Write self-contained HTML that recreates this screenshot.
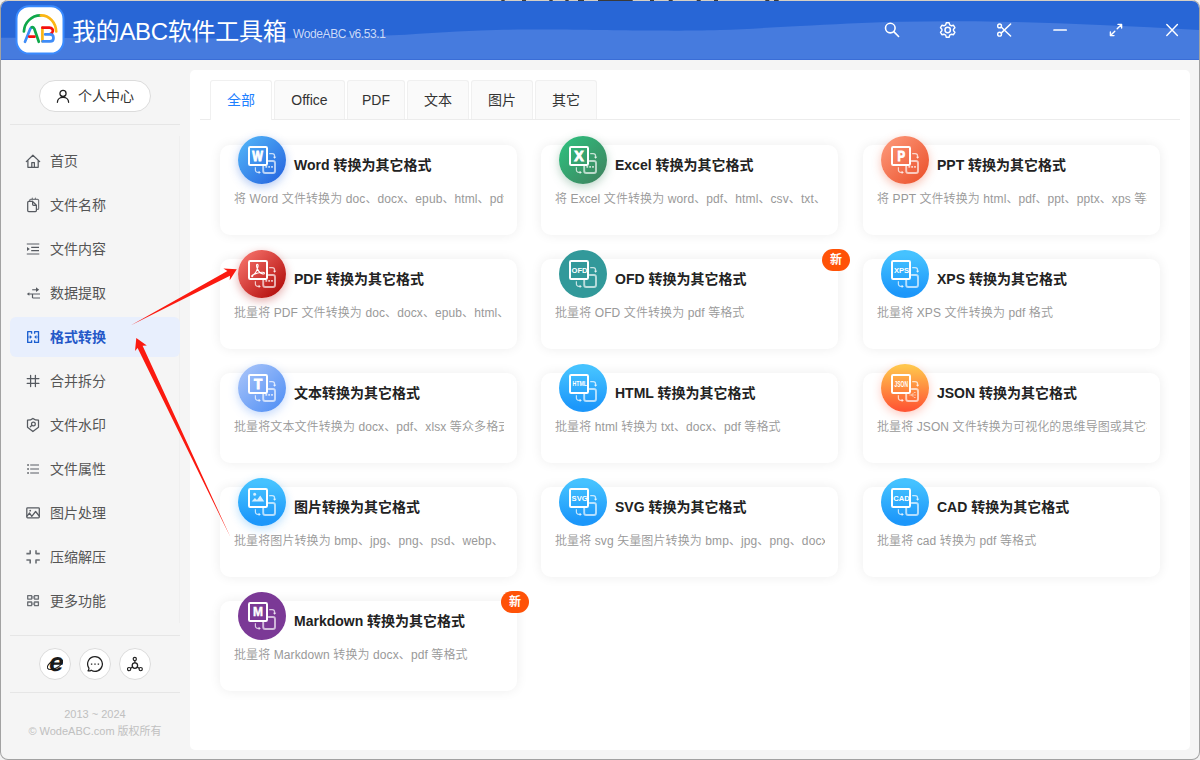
<!DOCTYPE html>
<html lang="zh-CN">
<head>
<meta charset="utf-8">
<title>我的ABC软件工具箱</title>
<style>
*{box-sizing:border-box;margin:0;padding:0}
html,body{width:1200px;height:760px;overflow:hidden}
body{background:#f2f2f2;font-family:"Liberation Sans","Noto Sans CJK SC",sans-serif;color:#333;position:relative}
#edgeT{position:absolute;left:0;top:0}
#win{position:absolute;left:1px;top:1px;width:1198px;height:758px;background:#f5f5f5;border-radius:7px;overflow:hidden;box-shadow:0 0 0 1px #a2a2a2}
#abs{position:absolute;left:-1px;top:-1px;width:1200px;height:760px}
#abs>*{position:absolute}
/* title bar */
#tb{left:0;top:0;width:1200px;height:60px;background:#2866d6;overflow:hidden}
#tb>*{position:absolute}
#title{left:72px;top:14px;font-size:24px;line-height:36px;color:#fff;white-space:nowrap;letter-spacing:-.3px}
#ver{left:293px;top:24px;font-size:12px;line-height:20px;color:#cbdaf7;white-space:nowrap;letter-spacing:-.4px}
/* sidebar */
#uc{left:39px;top:80px;width:112px;height:32px;border:1px solid #dcdcdc;border-radius:16px;background:#fff}
#uc span{position:absolute;left:38px;top:4px;line-height:22px;font-size:14px;color:#333;white-space:nowrap}
#uc svg{position:absolute;left:15px;top:7px;width:16px;height:16px}
.hr{left:10px;width:170px;height:1px;background:#e6e6e6}
#vline{left:179px;top:136px;width:1px;height:487px;background:#efefef}
.mi{left:10px;width:170px;height:40px;border-radius:6px;font-size:14px;color:#555}
.mi span{position:absolute;left:40px;top:8px;line-height:24px;white-space:nowrap}
.mi svg{position:absolute;left:15px;top:12px;width:16px;height:16px}
.mi.on{background:#e8effd;color:#2458c8;font-weight:700}
.cb{top:648px;width:32px;height:32px;border-radius:50%;background:#fff;border:1px solid #dcdcdc}
.cb svg{position:absolute;left:7px;top:7px;width:16px;height:16px}
.ft{left:0;width:190px;text-align:center;font-size:11px;color:#c0c0c0;line-height:16px;white-space:nowrap}
/* main */
#main{left:190px;top:70px;width:1000px;height:680px;background:#fff;border-radius:5px}
#tabline{left:200px;top:119px;width:980px;height:1px;background:#ececec}
.tab{top:80px;height:39px;border:1px solid #f0f0f0;border-bottom:none;background:#fafafa;border-radius:3px 3px 0 0;font-size:14px;color:#333;text-align:center;line-height:38px}
.tab.on{background:#fff;color:#1e80ff;height:40px}
.card{width:297px;height:90px;background:#fff;border-radius:10px;box-shadow:0 0 12px rgba(0,0,0,.075)}
.ic{position:absolute;left:18px;top:-9px;width:48px;height:48px;border-radius:50%}
.ic-word{background:linear-gradient(135deg,#4fb0f7 10%,#2868e0 90%);box-shadow:0 3px 10px rgba(40,104,224,.35)}
.ic-excel{background:linear-gradient(135deg,#2fbd7d 10%,#3e8660 90%);box-shadow:0 3px 10px rgba(62,134,96,.35)}
.ic-ppt{background:linear-gradient(135deg,#fc9576 10%,#ec5530 90%);box-shadow:0 3px 10px rgba(236,85,48,.35)}
.ic-pdf{background:linear-gradient(135deg,#f46f68 10%,#b30e0c 90%);box-shadow:0 3px 10px rgba(179,14,12,.35)}
.ic-ofd{background:#32999a}
.ic-xps,.ic-html,.ic-img,.ic-svg,.ic-cad{background:linear-gradient(180deg,#45c2ff 10%,#1c97fa 90%)}
.ic-img{box-shadow:0 3px 10px rgba(28,151,250,.3)}
.ic-txt{background:linear-gradient(135deg,#a3c1f9 10%,#5592f5 90%);box-shadow:0 3px 10px rgba(85,146,245,.35)}
.ic-json{background:linear-gradient(180deg,#ffc54c 5%,#ff5634 95%);box-shadow:0 3px 10px rgba(255,86,52,.3)}
.ic-md{background:#7b3996}
.ic svg{position:absolute;left:0;top:0;width:48px;height:48px}
.ct{position:absolute;left:74px;top:8px;font-size:14px;line-height:24px;font-weight:700;color:#222;white-space:nowrap}
.cd{position:absolute;left:14px;top:44px;width:270px;overflow:hidden;font-size:12px;line-height:20px;color:#999;font-weight:350;white-space:nowrap;letter-spacing:.1px}
.new{position:absolute;right:-12px;top:-10px;width:28px;height:22px;border-radius:11px;background:#ff5207;color:#fff;font-size:12px;line-height:22px;text-align:center;font-weight:700}
#arrows{left:0;top:0;width:1200px;height:760px;pointer-events:none}
</style>
</head>
<body>
<div id="win"><div id="abs">
  <div id="tb">
    <svg width="1200" height="60" viewBox="0 0 1200 60" style="left:0;top:0"><path d="M0 37.7C41.7 37.83 103.3 38.17 150 38.3C196.7 38.43 241.7 38.92 280 38.5C318.3 38.08 346.7 37.15 380 35.8C413.3 34.45 451.7 31.43 480 30.4C508.3 29.37 521.7 29.57 550 29.6C578.3 29.63 621.7 30.53 650 30.6C678.3 30.67 695.0 30.77 720 30C745.0 29.23 770.0 27.37 800 26C830.0 24.63 866.7 22.52 900 21.8C933.3 21.08 966.7 21.17 1000 21.7C1033.3 22.23 1066.7 23.62 1100 25C1133.3 26.38 1166.7 28.33 1200 30V60H0z" fill="#467bde"/><path d="M0 59.500H1200" stroke="#3a6dd6" stroke-width="1"/><rect x="16.500" y="6.200" width="47" height="47.300" rx="12.500" fill="#fff" stroke="#3a8bff" stroke-width="2"/><g fill="none" stroke-width="2.700" stroke-linecap="round" stroke-linejoin="round"><path d="M23.900 31.500C24.300 22.500 31.500 15.500 40.500 15.400" stroke="#0fa84a"/><path d="M40.900 15.400C49.600 15.500 55.800 22.500 56.200 31.500" stroke="#fbb615"/><path d="M25 41.800L30.400 28.600Q31.300 27 32.600 27.400" stroke="#3f8cf7"/><path d="M31.800 27.200Q33.400 26.600 34.300 28.800L38.800 41.800" stroke="#0fa84a"/><path d="M29.300 36.700H34.500" stroke="#f50f0f"/><path d="M42.400 27.900V41.200" stroke="#fbb615"/><path d="M42.400 27.700H49.400C52.200 27.700 53 29.600 52.800 31.200C52.600 32.800 51.600 33.600 50.500 33.900" stroke="#f50f0f"/><path d="M45.200 34.400H50C52.400 34.400 53.500 36.100 53.500 37.900C53.500 39.900 52.200 41.400 50 41.400H42.600" stroke="#3f8cf7"/></g><g fill="none" stroke="#fff" stroke-width="1.600" stroke-linecap="round" stroke-linejoin="round"><circle cx="890.300" cy="28.100" r="4.800"/><path d="M893.800 31.600L898.600 36.500"/><circle cx="947.700" cy="30" r="2.700" stroke-width="1.500"/><path d="M946.300 22.800H949.100L949.700 24.800L951.500 25.800L953.500 25.300L954.900 27.700L953.500 29.200V30.800L954.900 32.300L953.500 34.700L951.500 34.200L949.700 35.200L949.100 37.200H946.300L945.700 35.200L943.900 34.200L941.900 34.700L940.500 32.300L941.900 30.800V29.200L940.500 27.700L941.900 25.300L943.900 25.800L945.700 24.800z" stroke-width="1.400"/><circle cx="999.600" cy="25.900" r="1.900" stroke-width="1.400"/><circle cx="999.600" cy="34.200" r="1.900" stroke-width="1.400"/><path d="M1001.200 27L1010.600 36M1001.200 33.100L1010.600 24" stroke-width="1.500"/><path d="M1054 30H1066.200" stroke-width="1.700"/><path d="M1117.200 28.800L1121.500 24.500M1118 24.400H1121.600V28M1114.800 31.200L1110.500 35.500M1110.400 32V35.600H1114" stroke-width="1.400"/><path d="M1166.800 24.600L1177.400 35.600M1177.400 24.600L1166.800 35.600" stroke-width="1.400"/></g></svg>
    <div id="title">我的ABC软件工具箱</div>
    <div id="ver">WodeABC v6.53.1</div>
    
  </div>
  <div id="uc"><svg viewBox="0 0 16 16"><circle cx="8" cy="5.400" r="3.050" fill="none" stroke="#222" stroke-width="1.300"/><path d="M2.400 14.300C2.400 11.300 4.800 9.400 8 9.400S13.600 11.300 13.600 14.300" fill="none" stroke="#222" stroke-width="1.300" stroke-linecap="round"/></svg><span>个人中心</span></div>
  <div class="hr" style="top:124px"></div>
  <div id="vline"></div>
  <div class="mi" style="top:141px"><svg viewBox="0 0 16 16"><path d="M1.300 8.600L7.900 2.200L14.700 8.600M2.900 7.500V14.300H13.200V7.500M6.800 14.300V9.600H9.400V14.300" fill="none" stroke="#565a60" stroke-width="1.25" stroke-linecap="round" stroke-linejoin="round"/></svg><span>首页</span></div>
  <div class="mi" style="top:185px"><svg viewBox="0 0 16 16"><path d="M4.700 4.200V3.300a1 1 0 0 1 1-1H12.600a1 1 0 0 1 1 1V11.400a1 1 0 0 1-1 1H11.600M7.300 2.300V1.200M10.400 2.300V1.200" fill="none" stroke="#565a60" stroke-width="1.25" stroke-linecap="round" stroke-linejoin="round" stroke-opacity=".8"/><path d="M7.600 4.400H3.700a1 1 0 0 0-1 1V13.500a1 1 0 0 0 1 1H10.400a1 1 0 0 0 1-1V8.300L7.600 4.400V7.300a1 1 0 0 0 1 1H11.400" fill="none" stroke="#565a60" stroke-width="1.25" stroke-linecap="round" stroke-linejoin="round"/></svg><span>文件名称</span></div>
  <div class="mi" style="top:229px"><svg viewBox="0 0 16 16"><path d="M1.800 3H14.300M1.800 13H14.300" fill="none" stroke="#8d9095" stroke-width="1.5"/><path d="M6.200 6.400H14M6.200 9.600H14" fill="none" stroke="#565a60" stroke-width="1.3"/><path d="M2 5.900L4.800 8L2 10.100z" fill="#565a60"/></svg><span>文件内容</span></div>
  <div class="mi" style="top:273px"><svg viewBox="0 0 16 16"><path d="M7.200 4.700H11.500" fill="none" stroke="#7a7d82" stroke-width="1.4"/><path d="M11 2.300L14.200 4.700L11 7.100z" fill="#565a60"/><path d="M4 9H15M7.500 13H15" fill="none" stroke="#8d9095" stroke-width="1.5"/><path d="M7.500 9V13" fill="none" stroke="#565a60" stroke-width="1.2"/><path d="M4.300 7.200L1.800 9L4.300 10.800z" fill="#565a60"/></svg><span>数据提取</span></div>
  <div class="mi on" style="top:317px"><svg viewBox="0 0 16 16"><path d="M6.600 4.800V2.600H2.700V13.400H6.600V11.200M9.600 4.800V2.600H13.500V13.400H9.600V11.200" fill="none" stroke="#1b5fd0" stroke-width="1.35" stroke-linejoin="round"/><path d="M2.700 8H5M13.500 8H11.200" stroke="#1b5fd0" stroke-opacity=".7" stroke-width="1.200" fill="none"/><path d="M4.800 6.100L7 8L4.800 9.900zM11.400 6.100L9.200 8L11.400 9.900z" fill="#1b5fd0"/></svg><span>格式转换</span></div>
  <div class="mi" style="top:361px"><svg viewBox="0 0 16 16"><path d="M5.600 2.300V13.600M10.400 2.300V13.600M2.200 5.500H13.900M2.200 10.400H13.900" fill="none" stroke="#565a60" stroke-width="1.25" stroke-linecap="round" stroke-linejoin="round"/></svg><span>合并拆分</span></div>
  <div class="mi" style="top:405px"><svg viewBox="0 0 16 16"><path d="M7.900 1.500C6.500 2.700 4.500 3.200 2.500 3.200V10.300L7.900 14.500L13.500 10.300V3.200C11.500 3.200 9.400 2.700 7.900 1.500z" fill="none" stroke="#565a60" stroke-width="1.25" stroke-linecap="round" stroke-linejoin="round"/><circle cx="8.400" cy="6.900" r="1.900" fill="none" stroke="#565a60" stroke-width="1.25" stroke-linecap="round" stroke-linejoin="round"/><path d="M7 8.300L5.300 9.800" fill="none" stroke="#565a60" stroke-width="1.25" stroke-linecap="round" stroke-linejoin="round"/></svg><span>文件水印</span></div>
  <div class="mi" style="top:449px"><svg viewBox="0 0 16 16"><path d="M2.200 4H3.900M2.200 8H3.900M2.200 12H3.900" fill="none" stroke="#565a60" stroke-width="1.700"/><path d="M5.200 4H14M5.200 8H14M5.200 12H14" fill="none" stroke="#8d9095" stroke-width="1.700"/></svg><span>文件属性</span></div>
  <div class="mi" style="top:493px"><svg viewBox="0 0 16 16"><rect x="1.800" y="2.800" width="12.500" height="10.100" rx=".8" fill="none" stroke="#565a60" stroke-width="1.25" stroke-linecap="round" stroke-linejoin="round"/><circle cx="5.200" cy="5.700" r=".9" fill="#565a60"/><path d="M2 11.200L4.600 8L6.800 11.300L10.600 6.500L14.200 11" fill="none" stroke="#565a60" stroke-width="1.25" stroke-linecap="round" stroke-linejoin="round" stroke-width="1.050"/></svg><span>图片处理</span></div>
  <div class="mi" style="top:537px"><svg viewBox="0 0 16 16"><path d="M1.400 4.600H5.200V1.200M14.800 4.600H11V1.200M1.400 11H5.200V14.500M14.800 11H11V14.500" fill="none" stroke="#6a6e73" stroke-width="1.600" stroke-linejoin="round"/></svg><span>压缩解压</span></div>
  <div class="mi" style="top:581px"><svg viewBox="0 0 16 16"><path d="M2.700 2.600H6.600V6.100H2.700zM9.500 2.600H13.400V6.100H9.500zM2.700 9H6.600V12.600H2.700zM9.500 9H13.400V12.600H9.500z" fill="none" stroke="#6a6e73" stroke-width="1.300" stroke-linejoin="round"/><path d="M6.600 4.350H9.500M6.600 10.800H9.500" stroke="#8d9095" stroke-opacity=".8" stroke-width="2.600" fill="none"/></svg><span>更多功能</span></div>
  <div class="hr" style="top:635px"></div>
  <div class="cb" style="left:39px"><svg viewBox="0 0 16 16"><ellipse cx="8" cy="8.300" rx="8.400" ry="3.900" transform="rotate(-28 8 8.300)" fill="none" stroke="#222" stroke-width="1.100"/><text x="8.300" y="15" text-anchor="middle" font-family="Liberation Sans,sans-serif" font-size="26" font-weight="700" fill="#1a1a1a" transform="skewX(-9) translate(2.300 0)">e</text></svg></div>
  <div class="cb" style="left:79px"><svg viewBox="0 0 16 16"><path d="M8 .700A7.300 7.300 0 1 1 4.200 14.200C3.300 14.900 2 15.100 1 14.800C1.700 14 2 13.100 1.900 12.100A7.300 7.300 0 0 1 8 .700z" fill="none" stroke="#222" stroke-width="1.250" stroke-linejoin="round"/><path d="M3.900 8.100H5.300M7.300 8.100H8.700M10.700 8.100H12.100" stroke="#222" stroke-width="1.400" fill="none"/></svg></div>
  <div class="cb" style="left:119px"><svg viewBox="0 0 16 16"><circle cx="7.900" cy="9.600" r="2.700" fill="none" stroke="#222" stroke-width="1.300"/><circle cx="7.800" cy="2.900" r="1.600" fill="none" stroke="#222" stroke-width="1.150"/><circle cx="2.100" cy="13.100" r="1.650" fill="none" stroke="#222" stroke-width="1.150"/><circle cx="13.700" cy="13.100" r="1.650" fill="none" stroke="#222" stroke-width="1.150"/><path d="M7.900 4.500V6.900M5.600 11.100L3.500 12.300M10.200 11.100L12.300 12.300" stroke="#222" stroke-width="1.300" fill="none"/></svg></div>
  <div class="hr" style="top:692px"></div>
  <div class="ft" style="top:706px">2013 ~ 2024</div>
  <div class="ft" style="top:723px">© WodeABC.com 版权所有</div>
  <div id="main"></div>
  <div id="tabline"></div>
  <div class="tab on" style="left:210px;width:62px">全部</div>
  <div class="tab" style="left:274px;width:71px">Office</div>
  <div class="tab" style="left:347px;width:58px">PDF</div>
  <div class="tab" style="left:407px;width:62px">文本</div>
  <div class="tab" style="left:471px;width:62px">图片</div>
  <div class="tab" style="left:535px;width:62px">其它</div>
  <div class="card" style="left:220px;top:145px"><div class="ic ic-word"><svg viewBox="0 0 48 48"><path d="M30.100 25H35a2 2 0 0 1 2 2V35a2 2 0 0 1-2 2H27.200a2 2 0 0 1-2-2V30.100" fill="none" stroke="#fff" stroke-opacity=".66" stroke-width="1.900"/><path d="M27.400 30h1.800v1.800h-1.800zM30.250 30h1.800v1.800h-1.800zM33.100 30h1.800v1.800h-1.800z" fill="#fff" fill-opacity=".72"/><path d="M31.200 17.600H34.200a2.400 2.400 0 0 1 2.400 2.400V21.400" fill="none" stroke="#fff" stroke-opacity=".72" stroke-width="1.200"/><path d="M34.900 20.700h3.400l-1.700 2.100z" fill="#fff" fill-opacity=".8"/><path d="M17.400 31.200V34a2.400 2.400 0 0 0 2.400 2.400H21.400" fill="none" stroke="#fff" stroke-opacity=".72" stroke-width="1.200"/><path d="M20.700 34.700v3.400l2.100-1.700z" fill="#fff" fill-opacity=".8"/><rect x="11" y="11" width="18" height="18" rx="1.200" fill="none" stroke="#fff" stroke-width="2"/><text x="19.6" y="25" text-anchor="middle" font-family="Liberation Sans,sans-serif" font-size="14" font-weight="700" fill="#fff" stroke="#fff" stroke-width=".9" textLength="10.6" lengthAdjust="spacingAndGlyphs">W</text></svg></div><div class="ct">Word 转换为其它格式</div><div class="cd">将 Word 文件转换为 doc、docx、epub、html、pdf 等格式</div></div>
  <div class="card" style="left:541px;top:145px"><div class="ic ic-excel"><svg viewBox="0 0 48 48"><path d="M30.100 25H35a2 2 0 0 1 2 2V35a2 2 0 0 1-2 2H27.200a2 2 0 0 1-2-2V30.100" fill="none" stroke="#fff" stroke-opacity=".66" stroke-width="1.900"/><path d="M27.400 30h1.800v1.800h-1.800zM30.250 30h1.800v1.800h-1.800zM33.100 30h1.800v1.800h-1.800z" fill="#fff" fill-opacity=".72"/><path d="M31.200 17.600H34.200a2.400 2.400 0 0 1 2.400 2.400V21.400" fill="none" stroke="#fff" stroke-opacity=".72" stroke-width="1.200"/><path d="M34.900 20.700h3.400l-1.700 2.100z" fill="#fff" fill-opacity=".8"/><path d="M17.400 31.200V34a2.400 2.400 0 0 0 2.400 2.400H21.400" fill="none" stroke="#fff" stroke-opacity=".72" stroke-width="1.200"/><path d="M20.700 34.700v3.400l2.100-1.700z" fill="#fff" fill-opacity=".8"/><rect x="11" y="11" width="18" height="18" rx="1.200" fill="none" stroke="#fff" stroke-width="2"/><text x="20" y="25" text-anchor="middle" font-family="Liberation Sans,sans-serif" font-size="14" font-weight="700" fill="#fff" stroke="#fff" stroke-width=".9" textLength="9.4" lengthAdjust="spacingAndGlyphs">X</text></svg></div><div class="ct">Excel 转换为其它格式</div><div class="cd">将 Excel 文件转换为 word、pdf、html、csv、txt、xml 等格式</div></div>
  <div class="card" style="left:863px;top:145px"><div class="ic ic-ppt"><svg viewBox="0 0 48 48"><path d="M30.100 25H35a2 2 0 0 1 2 2V35a2 2 0 0 1-2 2H27.200a2 2 0 0 1-2-2V30.100" fill="none" stroke="#fff" stroke-opacity=".66" stroke-width="1.900"/><path d="M27.400 30h1.800v1.800h-1.800zM30.250 30h1.800v1.800h-1.800zM33.100 30h1.800v1.800h-1.800z" fill="#fff" fill-opacity=".72"/><path d="M31.200 17.600H34.200a2.400 2.400 0 0 1 2.400 2.400V21.400" fill="none" stroke="#fff" stroke-opacity=".72" stroke-width="1.200"/><path d="M34.900 20.700h3.400l-1.700 2.100z" fill="#fff" fill-opacity=".8"/><path d="M17.400 31.200V34a2.400 2.400 0 0 0 2.400 2.400H21.400" fill="none" stroke="#fff" stroke-opacity=".72" stroke-width="1.200"/><path d="M20.700 34.700v3.400l2.100-1.700z" fill="#fff" fill-opacity=".8"/><rect x="11" y="11" width="18" height="18" rx="1.200" fill="none" stroke="#fff" stroke-width="2"/><text x="20.3" y="25" text-anchor="middle" font-family="Liberation Sans,sans-serif" font-size="14" font-weight="700" fill="#fff" stroke="#fff" stroke-width=".9" textLength="7.6" lengthAdjust="spacingAndGlyphs">P</text></svg></div><div class="ct">PPT 转换为其它格式</div><div class="cd">将 PPT 文件转换为 html、pdf、ppt、pptx、xps 等格式</div></div>
  <div class="card" style="left:220px;top:259px"><div class="ic ic-pdf"><svg viewBox="0 0 48 48"><path d="M30.100 25H35a2 2 0 0 1 2 2V35a2 2 0 0 1-2 2H27.200a2 2 0 0 1-2-2V30.100" fill="none" stroke="#fff" stroke-opacity=".66" stroke-width="1.900"/><path d="M27.400 30h1.800v1.800h-1.800zM30.250 30h1.800v1.800h-1.800zM33.100 30h1.800v1.800h-1.800z" fill="#fff" fill-opacity=".72"/><path d="M31.200 17.600H34.200a2.400 2.400 0 0 1 2.400 2.400V21.400" fill="none" stroke="#fff" stroke-opacity=".72" stroke-width="1.200"/><path d="M34.900 20.700h3.400l-1.700 2.100z" fill="#fff" fill-opacity=".8"/><path d="M17.400 31.200V34a2.400 2.400 0 0 0 2.400 2.400H21.400" fill="none" stroke="#fff" stroke-opacity=".72" stroke-width="1.200"/><path d="M20.700 34.700v3.400l2.100-1.700z" fill="#fff" fill-opacity=".8"/><rect x="11" y="11" width="18" height="18" rx="1.200" fill="none" stroke="#fff" stroke-width="2"/><path d="M14.600 25.400c2.200-1.200 4.300-4.600 5.200-8 .5-1.900.3-3.200-.5-3.200s-1 1.400-.4 3.300c1 3.200 3.600 5.800 5.800 6.400 1.200.3 1.900-.1 1.800-.7-.1-.7-1.100-1-2.500-.9-3 .2-7 1.400-9.300 2.700-.9.500-1.200 1.100-.9 1.500.2.300.5.100.8-.100z" fill="none" stroke="#fff" stroke-width="1.100" stroke-linejoin="round"/></svg></div><div class="ct">PDF 转换为其它格式</div><div class="cd">批量将 PDF 文件转换为 doc、docx、epub、html、</div></div>
  <div class="card" style="left:541px;top:259px"><div class="ic ic-ofd"><svg viewBox="0 0 48 48"><path d="M30.100 25H35a2 2 0 0 1 2 2V35a2 2 0 0 1-2 2H27.200a2 2 0 0 1-2-2V30.100" fill="none" stroke="#fff" stroke-opacity=".66" stroke-width="1.900"/><path d="M31.200 17.600H34.200a2.400 2.400 0 0 1 2.400 2.400V21.400" fill="none" stroke="#fff" stroke-opacity=".72" stroke-width="1.200"/><path d="M34.900 20.700h3.400l-1.700 2.100z" fill="#fff" fill-opacity=".8"/><path d="M17.400 31.200V34a2.400 2.400 0 0 0 2.400 2.400H21.400" fill="none" stroke="#fff" stroke-opacity=".72" stroke-width="1.200"/><path d="M20.700 34.700v3.400l2.100-1.700z" fill="#fff" fill-opacity=".8"/><rect x="11" y="11" width="18" height="18" rx="1.200" fill="none" stroke="#fff" stroke-width="2"/><text x="20.6" y="22.6" text-anchor="middle" font-family="Liberation Sans,sans-serif" font-size="7.6" font-weight="700" fill="#fff">OFD</text></svg></div><div class="ct">OFD 转换为其它格式</div><div class="cd">批量将 OFD 文件转换为 pdf 等格式</div><div class="new">新</div></div>
  <div class="card" style="left:863px;top:259px"><div class="ic ic-xps"><svg viewBox="0 0 48 48"><path d="M30.100 25H35a2 2 0 0 1 2 2V35a2 2 0 0 1-2 2H27.200a2 2 0 0 1-2-2V30.100" fill="none" stroke="#fff" stroke-opacity=".66" stroke-width="1.900"/><path d="M31.200 17.600H34.200a2.400 2.400 0 0 1 2.400 2.400V21.400" fill="none" stroke="#fff" stroke-opacity=".72" stroke-width="1.200"/><path d="M34.900 20.700h3.400l-1.700 2.100z" fill="#fff" fill-opacity=".8"/><path d="M17.400 31.200V34a2.400 2.400 0 0 0 2.400 2.400H21.400" fill="none" stroke="#fff" stroke-opacity=".72" stroke-width="1.200"/><path d="M20.700 34.700v3.400l2.100-1.700z" fill="#fff" fill-opacity=".8"/><rect x="11" y="11" width="18" height="18" rx="1.200" fill="none" stroke="#fff" stroke-width="2"/><text x="20.6" y="22.6" text-anchor="middle" font-family="Liberation Sans,sans-serif" font-size="7.6" font-weight="700" fill="#fff">XPS</text></svg></div><div class="ct">XPS 转换为其它格式</div><div class="cd">批量将 XPS 文件转换为 pdf 格式</div></div>
  <div class="card" style="left:220px;top:373px"><div class="ic ic-txt"><svg viewBox="0 0 48 48"><path d="M30.100 25H35a2 2 0 0 1 2 2V35a2 2 0 0 1-2 2H27.200a2 2 0 0 1-2-2V30.100" fill="none" stroke="#fff" stroke-opacity=".66" stroke-width="1.900"/><path d="M27.400 30h1.800v1.800h-1.800zM30.250 30h1.800v1.800h-1.800zM33.100 30h1.800v1.800h-1.800z" fill="#fff" fill-opacity=".72"/><path d="M31.200 17.600H34.200a2.400 2.400 0 0 1 2.400 2.400V21.400" fill="none" stroke="#fff" stroke-opacity=".72" stroke-width="1.200"/><path d="M34.900 20.700h3.400l-1.700 2.100z" fill="#fff" fill-opacity=".8"/><path d="M17.400 31.200V34a2.400 2.400 0 0 0 2.400 2.400H21.400" fill="none" stroke="#fff" stroke-opacity=".72" stroke-width="1.200"/><path d="M20.700 34.700v3.400l2.100-1.700z" fill="#fff" fill-opacity=".8"/><rect x="11" y="11" width="18" height="18" rx="1.200" fill="none" stroke="#fff" stroke-width="2"/><text x="20" y="25" text-anchor="middle" font-family="Liberation Sans,sans-serif" font-size="14" font-weight="700" fill="#fff" stroke="#fff" stroke-width=".9" textLength="8.2" lengthAdjust="spacingAndGlyphs">T</text></svg></div><div class="ct">文本转换为其它格式</div><div class="cd">批量将文本文件转换为 docx、pdf、xlsx 等众多格式</div></div>
  <div class="card" style="left:541px;top:373px"><div class="ic ic-html"><svg viewBox="0 0 48 48"><path d="M30.100 25H35a2 2 0 0 1 2 2V35a2 2 0 0 1-2 2H27.200a2 2 0 0 1-2-2V30.100" fill="none" stroke="#fff" stroke-opacity=".66" stroke-width="1.900"/><path d="M31.200 17.600H34.200a2.400 2.400 0 0 1 2.400 2.400V21.400" fill="none" stroke="#fff" stroke-opacity=".72" stroke-width="1.200"/><path d="M34.900 20.700h3.400l-1.700 2.100z" fill="#fff" fill-opacity=".8"/><path d="M17.400 31.200V34a2.400 2.400 0 0 0 2.400 2.400H21.400" fill="none" stroke="#fff" stroke-opacity=".72" stroke-width="1.200"/><path d="M20.700 34.700v3.400l2.100-1.700z" fill="#fff" fill-opacity=".8"/><rect x="11" y="11" width="18" height="18" rx="1.200" fill="none" stroke="#fff" stroke-width="2"/><text x="20.8" y="22.2" text-anchor="middle" font-family="Liberation Sans,sans-serif" font-size="6.4" font-weight="700" fill="#fff" textLength="14.500" lengthAdjust="spacingAndGlyphs">HTML</text></svg></div><div class="ct">HTML 转换为其它格式</div><div class="cd">批量将 html 转换为 txt、docx、pdf 等格式</div></div>
  <div class="card" style="left:863px;top:373px"><div class="ic ic-json"><svg viewBox="0 0 48 48"><path d="M30.100 25H35a2 2 0 0 1 2 2V35a2 2 0 0 1-2 2H27.200a2 2 0 0 1-2-2V30.100" fill="none" stroke="#fff" stroke-opacity=".66" stroke-width="1.900"/><path d="M31.200 17.600H34.200a2.400 2.400 0 0 1 2.400 2.400V21.400" fill="none" stroke="#fff" stroke-opacity=".72" stroke-width="1.200"/><path d="M34.900 20.700h3.400l-1.700 2.100z" fill="#fff" fill-opacity=".8"/><path d="M17.400 31.200V34a2.400 2.400 0 0 0 2.400 2.400H21.400" fill="none" stroke="#fff" stroke-opacity=".72" stroke-width="1.200"/><path d="M20.700 34.700v3.400l2.100-1.700z" fill="#fff" fill-opacity=".8"/><rect x="11" y="11" width="18" height="18" rx="1.200" fill="none" stroke="#fff" stroke-width="2"/><text x="20.3" y="23.3" text-anchor="middle" font-family="Liberation Sans,sans-serif" font-size="9" font-weight="700" fill="#fff" textLength="13.500" lengthAdjust="spacingAndGlyphs">JSON</text><path d="M28.300 31h2.200M30.500 31l2.300-2.300M30.500 31h2.800M30.500 31l2.300 2.300M33 28.500h1.600M33.500 31h1.300M33 33.500h1.600" stroke="#fff" stroke-opacity=".6" stroke-width=".900" fill="none"/></svg></div><div class="ct">JSON 转换为其它格式</div><div class="cd">批量将 JSON 文件转换为可视化的思维导图或其它格式</div></div>
  <div class="card" style="left:220px;top:487px"><div class="ic ic-img"><svg viewBox="0 0 48 48"><path d="M30.100 25H35a2 2 0 0 1 2 2V35a2 2 0 0 1-2 2H27.200a2 2 0 0 1-2-2V30.100" fill="none" stroke="#fff" stroke-opacity=".66" stroke-width="1.900"/><path d="M31.200 17.600H34.200a2.400 2.400 0 0 1 2.400 2.400V21.400" fill="none" stroke="#fff" stroke-opacity=".72" stroke-width="1.200"/><path d="M34.900 20.700h3.400l-1.700 2.100z" fill="#fff" fill-opacity=".8"/><path d="M17.400 31.200V34a2.400 2.400 0 0 0 2.400 2.400H21.400" fill="none" stroke="#fff" stroke-opacity=".72" stroke-width="1.200"/><path d="M20.700 34.700v3.400l2.100-1.700z" fill="#fff" fill-opacity=".8"/><rect x="11" y="11" width="18" height="18" rx="1.200" fill="none" stroke="#fff" stroke-width="2"/><circle cx="16.600" cy="16.300" r="1.500" fill="#fff" fill-opacity=".8"/><path d="M13.600 23.600l3.300-3.600 2.100 2 3.200-4.600 4 6.200z" fill="#fff" fill-opacity=".8"/></svg></div><div class="ct">图片转换为其它格式</div><div class="cd">批量将图片转换为 bmp、jpg、png、psd、webp、</div></div>
  <div class="card" style="left:541px;top:487px"><div class="ic ic-svg"><svg viewBox="0 0 48 48"><path d="M30.100 25H35a2 2 0 0 1 2 2V35a2 2 0 0 1-2 2H27.200a2 2 0 0 1-2-2V30.100" fill="none" stroke="#fff" stroke-opacity=".66" stroke-width="1.900"/><path d="M31.200 17.600H34.200a2.400 2.400 0 0 1 2.400 2.400V21.400" fill="none" stroke="#fff" stroke-opacity=".72" stroke-width="1.200"/><path d="M34.900 20.700h3.400l-1.700 2.100z" fill="#fff" fill-opacity=".8"/><path d="M17.400 31.200V34a2.400 2.400 0 0 0 2.400 2.400H21.400" fill="none" stroke="#fff" stroke-opacity=".72" stroke-width="1.200"/><path d="M20.700 34.700v3.400l2.100-1.700z" fill="#fff" fill-opacity=".8"/><rect x="11" y="11" width="18" height="18" rx="1.200" fill="none" stroke="#fff" stroke-width="2"/><text x="20.6" y="22.6" text-anchor="middle" font-family="Liberation Sans,sans-serif" font-size="7.6" font-weight="700" fill="#fff">SVG</text></svg></div><div class="ct">SVG 转换为其它格式</div><div class="cd">批量将 svg 矢量图片转换为 bmp、jpg、png、docx 等格式</div></div>
  <div class="card" style="left:863px;top:487px"><div class="ic ic-cad"><svg viewBox="0 0 48 48"><path d="M30.100 25H35a2 2 0 0 1 2 2V35a2 2 0 0 1-2 2H27.200a2 2 0 0 1-2-2V30.100" fill="none" stroke="#fff" stroke-opacity=".66" stroke-width="1.900"/><path d="M31.200 17.600H34.200a2.400 2.400 0 0 1 2.400 2.400V21.400" fill="none" stroke="#fff" stroke-opacity=".72" stroke-width="1.200"/><path d="M34.900 20.700h3.400l-1.700 2.100z" fill="#fff" fill-opacity=".8"/><path d="M17.400 31.200V34a2.400 2.400 0 0 0 2.400 2.400H21.400" fill="none" stroke="#fff" stroke-opacity=".72" stroke-width="1.200"/><path d="M20.700 34.700v3.400l2.100-1.700z" fill="#fff" fill-opacity=".8"/><rect x="11" y="11" width="18" height="18" rx="1.200" fill="none" stroke="#fff" stroke-width="2"/><text x="20.6" y="22.6" text-anchor="middle" font-family="Liberation Sans,sans-serif" font-size="7.6" font-weight="700" fill="#fff">CAD</text></svg></div><div class="ct">CAD 转换为其它格式</div><div class="cd">批量将 cad 转换为 pdf 等格式</div></div>
  <div class="card" style="left:220px;top:601px"><div class="ic ic-md"><svg viewBox="0 0 48 48"><path d="M30.100 25H35a2 2 0 0 1 2 2V35a2 2 0 0 1-2 2H27.200a2 2 0 0 1-2-2V30.100" fill="none" stroke="#fff" stroke-opacity=".66" stroke-width="1.900"/><path d="M31.200 17.600H34.200a2.400 2.400 0 0 1 2.400 2.400V21.400" fill="none" stroke="#fff" stroke-opacity=".72" stroke-width="1.200"/><path d="M34.900 20.700h3.400l-1.700 2.100z" fill="#fff" fill-opacity=".8"/><path d="M17.400 31.200V34a2.400 2.400 0 0 0 2.400 2.400H21.400" fill="none" stroke="#fff" stroke-opacity=".72" stroke-width="1.200"/><path d="M20.700 34.700v3.400l2.100-1.700z" fill="#fff" fill-opacity=".8"/><rect x="11" y="11" width="18" height="18" rx="1.200" fill="none" stroke="#fff" stroke-width="2"/><text x="20" y="24.4" text-anchor="middle" font-family="Liberation Sans,sans-serif" font-size="12" font-weight="700" fill="#fff" stroke="#fff" stroke-width=".4">M</text></svg></div><div class="ct">Markdown 转换为其它格式</div><div class="cd">批量将 Markdown 转换为 docx、pdf 等格式</div><div class="new">新</div></div>
  <svg id="arrows" viewBox="0 0 1200 760"><g fill="#fb1a10"><path d="M130.500 325.500L227.400 271L223.400 268.400L236.800 269.200L229.700 280.300L230 275.800z"/><path d="M230.800 538L142.600 345.800L146.800 345.500L136.300 337.900L135 351L137.600 347.900z"/></g></svg>
</div></div>
<svg id="edgeT" width="1200" height="1" viewBox="0 0 1200 1"><rect x="6" y="0" width="1188" height="1" fill="#d6cfc4"/><g fill="#3a3a3a"><rect x="501.3" y="0" width="3.4" height="1"/><rect x="522" y="0" width="4" height="1"/><rect x="549.3" y="0" width="3.4" height="1"/><rect x="565.3" y="0" width="3.4" height="1"/><rect x="578" y="0" width="6" height="1"/><rect x="598" y="0" width="34.7" height="1"/><rect x="650" y="0" width="4" height="1"/><rect x="668.7" y="0" width="4.0" height="1"/><rect x="696.7" y="0" width="4.0" height="1"/><rect x="714" y="0" width="4" height="1"/><rect x="765.3" y="0" width="4.0" height="1"/><rect x="774" y="0" width="4.7" height="1"/></g></svg>
</body>
</html>
